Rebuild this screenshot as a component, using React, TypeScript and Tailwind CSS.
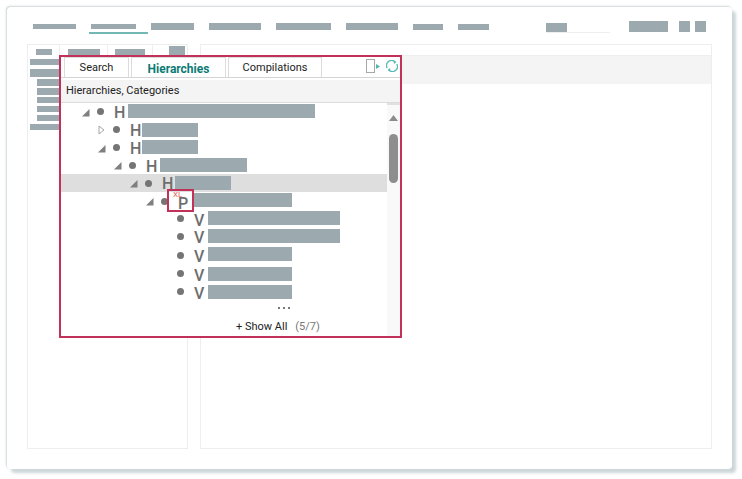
const font = "font-['Roboto','Liberation_Sans',sans-serif]";

function Bar({ className }: { className: string }) {
  return <div className={`shrink-0 bg-[#9caaaf] ${className}`} />;
}

function Arrow({ open }: { open?: boolean }) {
  return open ? (
    <svg width="9" height="9" viewBox="0 0 9 9" className="shrink-0">
      <path d="M8.5 1V8.5H1Z" fill="#7f7f7f" />
    </svg>
  ) : (
    <svg width="7" height="10" viewBox="0 0 7 10" className="ml-[1px] shrink-0">
      <path d="M1 1L6 5L1 9Z" fill="#fff" stroke="#a6a6a6" strokeWidth="1" />
    </svg>
  );
}

type Row = {
  pad: string;
  arrow?: "open" | "closed";
  letter: string;
  shift: string;
  bar: string;
  row: string;
  dot?: string;
  selected?: boolean;
};

const rows: Row[] = [
  { pad: "pl-[20px]", arrow: "open", letter: "H", shift: "pt-[2px]", bar: "w-[187px] h-[14px] ml-[4px] mb-[2px]", row: "h-[18px]", dot: "mb-[2px]" },
  { pad: "pl-[36px]", arrow: "closed", letter: "H", shift: "pt-[2px]", bar: "w-[56px] h-[14px] ml-[2px]", row: "h-[18px]", dot: "mb-[2px]" },
  { pad: "pl-[36px]", arrow: "open", letter: "H", shift: "pt-[2px]", bar: "w-[56px] h-[14px] ml-[2px] mb-[2px]", row: "h-[18px]", dot: "mb-[2px]" },
  { pad: "pl-[52px]", arrow: "open", letter: "H", shift: "pt-[2px]", bar: "w-[87px] h-[14px] ml-[4px] mb-[1px]", row: "h-[17px]", dot: "mb-[1px]" },
  { pad: "pl-[68px]", arrow: "open", letter: "H", shift: "pt-[2px]", bar: "w-[56px] h-[14px] ml-[3px]", row: "h-[18px]", selected: true },
  { pad: "pl-[84px]", arrow: "open", letter: "P", shift: "pt-[6px]", bar: "w-[99px] h-[14px] ml-[5px] mb-[2px]", row: "h-[18px]" },
  { pad: "pl-[100px]", letter: "V", shift: "pt-[4px]", bar: "w-[132px] h-[14px] ml-[4px] mb-[1px]", row: "h-[17px]" },
  { pad: "pl-[100px]", letter: "V", shift: "pt-[4px]", bar: "w-[132px] h-[14px] ml-[4px]", row: "h-[18px]" },
  { pad: "pl-[100px]", letter: "V", shift: "pt-[4px]", bar: "w-[84px] h-[14px] ml-[4px] mb-[2px]", row: "h-[20px]" },
  { pad: "pl-[100px]", letter: "V", shift: "pt-[3px]", bar: "w-[84px] h-[14px] ml-[4px]", row: "h-[18px]", dot: "mb-[2px]" },
  { pad: "pl-[100px]", letter: "V", shift: "pt-[3px]", bar: "w-[84px] h-[14px] ml-[4px]", row: "h-[18px]", dot: "mb-[2px]" },
];

function TreeRow({ r }: { r: Row }) {
  return (
    <div className={`flex items-center ${r.pad} ${r.row} ${r.selected ? "bg-[#dedede]" : ""}`}>
      <div className="flex w-[16px] shrink-0 items-center">
        {r.arrow === "open" && <Arrow open />}
        {r.arrow === "closed" && <Arrow />}
      </div>
      <div className={`h-[7px] w-[7px] shrink-0 rounded-full bg-[#757575] ${r.dot ?? ""}`} />
      <div className={`w-[20px] shrink-0 pl-[10px] text-[16px] font-medium leading-[16px] text-[#6e6e6e] ${r.shift}`}>
        {r.letter}
      </div>
      <Bar className={r.bar} />
    </div>
  );
}

function Tab({ label, className, active }: { label: string; className: string; active?: boolean }) {
  return (
    <div
      className={`flex h-[20px] items-center justify-center border border-b-0 border-[#dcdcdc] pt-[2px] ${
        active ? "text-[12px] font-bold text-[#0b7a75]" : "text-[11px] text-[#222]"
      } ${className}`}
    >
      {label}
    </div>
  );
}

function Popup() {
  return (
    <div className={`absolute left-[52px] top-[48px] flex h-[283px] w-[343px] flex-col border-2 border-[#c2315a] bg-white ${font}`}>
      <div className="flex h-[21px] shrink-0 items-end border-b border-[#d4d4d4] pl-[3px]">
        <Tab label="Search" className="w-[65px]" />
        <Tab label="Hierarchies" className="ml-[2px] w-[95px] bg-white" active />
        <Tab label="Compilations" className="ml-[2px] w-[94px]" />
        <div className="mb-[4px] ml-auto mr-[2px] flex items-center">
          <div className="h-[14px] w-[9px] border-[1.5px] border-[#a8a8a8]" />
          <svg width="4" height="5" viewBox="0 0 4 5" className="ml-[1px]">
            <path d="M0 0L4 2.5L0 5Z" fill="#4fb5b0" />
          </svg>
          <svg width="12" height="12" viewBox="0 0 12 12" className="ml-[6px]" fill="none" stroke="#58b9b5" strokeWidth="1.3">
            <path d="M1.2 8A5 5 0 0 1 8.5 1.5" />
            <path d="M10.8 4A5 5 0 0 1 3.5 10.5" />
            <path d="M7.5 0L10.5 2L8 4Z" fill="#58b9b5" stroke="none" />
            <path d="M4.5 12L1.5 10L4 8Z" fill="#58b9b5" stroke="none" />
          </svg>
        </div>
      </div>
      <div className="mt-[2px] flex h-[23px] shrink-0 items-center border-b border-[#dcdcdc] bg-[#f4f4f4] pl-[5px] pt-[1px] text-[11px] text-[#222]">
        Hierarchies, Categories
      </div>
      <div className="flex min-h-0 flex-1">
        <div className="flex min-w-0 flex-1 flex-col">
          {rows.map((r, i) => (
            <TreeRow key={i} r={r} />
          ))}
          <div className="ml-[217px] flex h-[17px] gap-[3px] pt-[6px]">
            <div className="h-[2px] w-[2px] bg-[#777]" />
            <div className="h-[2px] w-[2px] bg-[#777]" />
            <div className="h-[2px] w-[2px] bg-[#777]" />
          </div>
          <div className="flex h-[18px] items-center gap-[8px] pl-[175px] text-[11px]">
            <span className="text-[#222]">+ Show All</span>
            <span className="text-[#777]">(5/7)</span>
          </div>
        </div>
        <div className="flex w-[13px] shrink-0 flex-col items-center border-t-2 border-[#e0e0e0] bg-[#f9f9f9] pt-[10px]">
          <svg width="9" height="6" viewBox="0 0 9 6">
            <path d="M4.5 0L9 6H0Z" fill="#8c8c8c" />
          </svg>
          <div className="mt-[13px] h-[49px] w-[9px] rounded-full bg-[#8e8e8e]" />
        </div>
      </div>
      <div className="absolute left-[106px] top-[132px] h-[23px] w-[27px] border-[2.5px] border-[#c2315a]">
        <div className="absolute left-[4px] top-[0px] text-[8px] leading-[7px] text-[#e8604c]">XL</div>
      </div>
    </div>
  );
}

function LeftTab({ className, bar }: { className: string; bar: string }) {
  return (
    <div className={`flex h-[10px] items-end justify-center border-r border-[#eeeeee] ${className}`}>
      <Bar className={bar} />
    </div>
  );
}

function LeftPanel() {
  return (
    <div className="flex h-[405px] w-[161px] shrink-0 flex-col border border-[#eeeeee]">
      <div className="flex h-[10px] items-end">
        <LeftTab className="w-[32px]" bar="h-[6px] w-[16px]" />
        <LeftTab className="w-[48px]" bar="h-[6px] w-[32px]" />
        <LeftTab className="w-[45px]" bar="h-[6px] w-[30px]" />
        <Bar className="ml-[16px] h-[9px] w-[16px]" />
      </div>
      <div className="mt-[4px] flex flex-col pl-[2px]">
        <Bar className="h-[6px] w-[40px]" />
        <Bar className="mt-[4px] h-[8px] w-[40px]" />
        <Bar className="ml-[7px] mt-[2px] h-[7px] w-[30px]" />
        <Bar className="ml-[7px] mt-[2px] h-[7px] w-[30px]" />
        <Bar className="ml-[7px] mt-[2px] h-[6px] w-[30px]" />
        <Bar className="ml-[7px] mt-[3px] h-[6px] w-[30px]" />
        <Bar className="ml-[7px] mt-[3px] h-[6px] w-[30px]" />
        <Bar className="mt-[3px] h-[6px] w-[40px]" />
      </div>
    </div>
  );
}

export default function App() {
  return (
    <div className="h-[479px] w-[742px] overflow-hidden bg-white pl-[7px] pt-[7px]">
      <div className="relative h-[462px] w-[725px] rounded-[4px] bg-white shadow-[4px_4px_3px_#cdd6d8,-1px_-1px_2px_#ccd5d7]">
        <div className="flex h-[37px] items-start">
          <div className="relative flex items-center pl-[26px] pt-[16px]">
            <Bar className="h-[5px] w-[43px]" />
            <Bar className="ml-[15px] h-[5px] w-[45px]" />
            <Bar className="ml-[15px] h-[7px] w-[43px]" />
            <Bar className="ml-[15px] h-[7px] w-[52px]" />
            <Bar className="ml-[15px] h-[7px] w-[55px]" />
            <Bar className="ml-[15px] h-[7px] w-[52px]" />
            <Bar className="ml-[15px] h-[6px] w-[30px]" />
            <Bar className="ml-[15px] h-[6px] w-[31px]" />
            <div className="absolute left-[82px] top-[25px] h-[2px] w-[59px] bg-[#74b8b4]" />
          </div>
          <div className="ml-[57px] mt-[16px] flex items-start border-b border-[#eeeeee]">
            <Bar className="h-[9px] w-[21px]" />
            <div className="w-[43px]" />
          </div>
          <Bar className="ml-[19px] mt-[14px] h-[11px] w-[39px]" />
          <Bar className="ml-[11px] mt-[14px] h-[11px] w-[11px]" />
          <Bar className="ml-[5px] mt-[14px] h-[11px] w-[11px]" />
        </div>
        <div className="flex pl-[20px]">
          <LeftPanel />
          <div className="ml-[12px] h-[405px] w-[512px] shrink-0 border border-[#eeeeee]">
            <div className="mt-[10px] h-[29px] border-t border-[#eeeeee] bg-[#f4f4f4]" />
          </div>
        </div>
        <Popup />
      </div>
    </div>
  );
}
